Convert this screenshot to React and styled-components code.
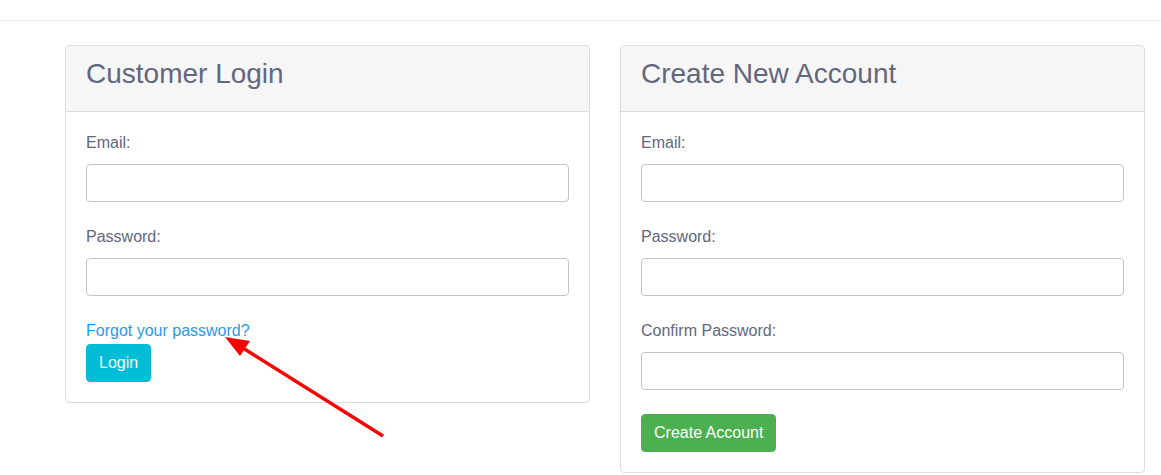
import React from 'react'
import styled, {createGlobalStyle} from 'styled-components';

const GlobalStyle = createGlobalStyle`
  body {
    margin: 0;
    background: #fff;
    font-family: "Liberation Sans", Arial, sans-serif;
    font-size: 16px;
    color: #63677e;
  }
  * { box-sizing: border-box; }
`;

const TopBar = styled.header`
  height: 21px;
  border-bottom: 1px solid #eeeef2;
`;

const Page = styled.main`
  position: relative;
  display: grid;
  grid-template-columns: 525px 525px;
  column-gap: 30px;
  align-items: start;
  padding: 24px 0 0 65px;
`;

const Card = styled.section`
  border: 1px solid #dddddd;
  border-radius: 4px;
  background: #fff;
`;

const CardHead = styled.div`
  height: 66px;
  padding: 11px 20px 0;
  background: #f6f6f6;
  border-bottom: 1px solid #dddddd;
  border-radius: 4px 4px 0 0;
`;

const Title = styled.h2`
  margin: 0;
  font-size: 28px;
  font-weight: 400;
  color: #63677e;
  line-height: 34px;
`;

const CardBody = styled.form`
  padding: 20px;
`;

const Field = styled.div`
  margin-bottom: 24px;
`;

const Label = styled.label`
  display: block;
  line-height: 20px;
  padding-top: 1px;
  margin-bottom: 11px;
  color: #63677e;
`;

const Input = styled.input`
  display: block;
  width: 100%;
  height: 38px;
  border: 1px solid #c4c4c4;
  border-radius: 4px;
  padding: 6px 12px;
  font: inherit;
  outline: none;
`;

const Forgot = styled.a`
  display: block;
  color: #2a98f0;
  text-decoration: none;
  line-height: 20px;
  padding-top: 1px;
  margin-bottom: 3px;
  width: max-content;
`;

const Button = styled.button`
  height: 38px;
  padding: 0 12px;
  border: 1px solid ${p => p.$color};
  border-radius: 4px;
  background: ${p => p.$color};
  color: #fff;
  font: inherit;
  font-size: 16px;
  cursor: pointer;
`;

const Arrow = styled.svg`
  position: absolute;
  left: 0;
  top: -21px;
  pointer-events: none;
  overflow: visible;
`;

const App = () => {
  return (
    <>
      <GlobalStyle />
      <TopBar />
      <Page>
        <Card>
          <CardHead><Title>Customer Login</Title></CardHead>
          <CardBody onSubmit={e => e.preventDefault()}>
            <Field>
              <Label>Email:</Label>
              <Input type="email" />
            </Field>
            <Field>
              <Label>Password:</Label>
              <Input type="password" />
            </Field>
            <Forgot href="#">Forgot your password?</Forgot>
            <Button $color="#00bcd4">Login</Button>
          </CardBody>
        </Card>

        <Card>
          <CardHead><Title>Create New Account</Title></CardHead>
          <CardBody onSubmit={e => e.preventDefault()}>
            <Field>
              <Label>Email:</Label>
              <Input type="email" />
            </Field>
            <Field>
              <Label>Password:</Label>
              <Input type="password" />
            </Field>
            <Field>
              <Label>Confirm Password:</Label>
              <Input type="password" />
            </Field>
            <Button $color="#4caf50">Create Account</Button>
          </CardBody>
        </Card>

        {/* annotation arrow pointing at the forgot link */}
        <Arrow width="1161" height="475" viewBox="0 0 1161 475">
          <line x1="383" y1="436" x2="238" y2="345" stroke="#ff0000" strokeWidth="3.5" />
          <polygon points="225,337 250,341 240,356" fill="#ff0000" />
        </Arrow>
      </Page>
    </>
  );
};

export default App;
